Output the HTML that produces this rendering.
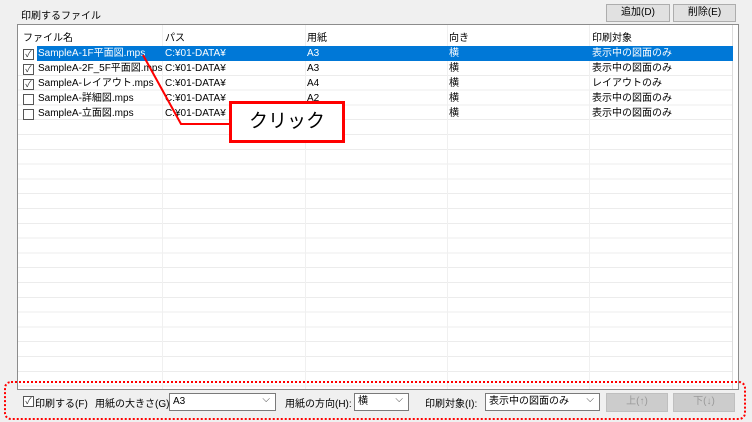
<html><head><style>
body{margin:0;width:752px;height:422px;background:#f0f0f0;font-family:"Liberation Sans","Noto Sans CJK JP",sans-serif;font-size:10px;color:#000;position:relative;overflow:hidden}
.a{position:absolute;white-space:nowrap}
.list{position:absolute;left:17px;top:24px;width:720px;height:364px;border:1px solid #8c8c8c;background:#fff;overflow:hidden}
.grid{position:absolute;left:0;top:36px;width:715px;height:330px;background:repeating-linear-gradient(to bottom,transparent 0,transparent 13.8px,#ececec 13.8px,#ececec 14.8px)}
.vl{position:absolute;top:0;width:1px;height:364px;background:#f0f0f0}
.btn{position:absolute;background:#e1e1e1;border:1px solid #adadad;text-align:center;font-size:10px;line-height:16px}
.cb{position:absolute;width:9px;height:9px;border:1px solid #555;background:#fff;font-size:9px;line-height:9px;text-align:center;color:#333}
.sel{position:absolute;border:1px solid #7a7a7a;background:#fff;height:16px;line-height:16px;padding-left:3px;font-size:10px}
.sel::after{content:"⌵";position:absolute;right:5px;top:-2px;color:#444}
</style></head><body>
<div class="a" style="left:21px;top:7px">印刷するファイル</div>
<div class="btn" style="left:606px;top:4px;width:62px">追加(D)</div>
<div class="btn" style="left:673px;top:4px;width:61px">削除(E)</div>
<div class="list">
<div class="grid"></div>
<div class="vl" style="left:144px"></div><div class="vl" style="left:287px"></div><div class="vl" style="left:429px"></div><div class="vl" style="left:571px"></div><div class="vl" style="left:714px;background:#ddd"></div>
<div class="a" style="left:5px;top:4px">ファイル名</div>
<div class="a" style="left:147px;top:4px">パス</div>
<div class="a" style="left:289px;top:4px">用紙</div>
<div class="a" style="left:431px;top:4px">向き</div>
<div class="a" style="left:574px;top:4px">印刷対象</div>
<div class="a" style="left:19px;top:21px;width:696px;height:15px;background:#0078d7"></div>
<div class="a" style="left:0;top:21px;line-height:15px;width:715px;height:75px">
<div class="a" style="left:20px;top:0;color:#fff">SampleA-1F平面図.mps</div><div class="a" style="left:147px;top:0;color:#fff">C:¥01-DATA¥</div><div class="a" style="left:289px;top:0;color:#fff">A3</div><div class="a" style="left:431px;top:0;color:#fff">横</div><div class="a" style="left:574px;top:0;color:#fff">表示中の図面のみ</div>
<div class="a" style="left:20px;top:15px">SampleA-2F_5F平面図.mps</div><div class="a" style="left:147px;top:15px">C:¥01-DATA¥</div><div class="a" style="left:289px;top:15px">A3</div><div class="a" style="left:431px;top:15px">横</div><div class="a" style="left:574px;top:15px">表示中の図面のみ</div>
<div class="a" style="left:20px;top:30px">SampleA-レイアウト.mps</div><div class="a" style="left:147px;top:30px">C:¥01-DATA¥</div><div class="a" style="left:289px;top:30px">A4</div><div class="a" style="left:431px;top:30px">横</div><div class="a" style="left:574px;top:30px">レイアウトのみ</div>
<div class="a" style="left:20px;top:45px">SampleA-詳細図.mps</div><div class="a" style="left:147px;top:45px">C:¥01-DATA¥</div><div class="a" style="left:289px;top:45px">A2</div><div class="a" style="left:431px;top:45px">横</div><div class="a" style="left:574px;top:45px">表示中の図面のみ</div>
<div class="a" style="left:20px;top:60px">SampleA-立面図.mps</div><div class="a" style="left:147px;top:60px">C:¥01-DATA¥</div><div class="a" style="left:289px;top:60px">A3</div><div class="a" style="left:431px;top:60px">横</div><div class="a" style="left:574px;top:60px">表示中の図面のみ</div>
</div>
<div class="cb" style="left:5px;top:24px">✓</div><div class="cb" style="left:5px;top:39px">✓</div><div class="cb" style="left:5px;top:54px">✓</div><div class="cb" style="left:5px;top:69px"></div><div class="cb" style="left:5px;top:84px"></div>
</div>
<svg class="a" style="left:0;top:0" width="752" height="422"><polyline points="143,55 181,124 229,124" fill="none" stroke="#f00" stroke-width="2"/>
<rect x="5" y="382" width="740" height="37" rx="6" fill="none" stroke="#f00" stroke-width="2" stroke-dasharray="2,2"/></svg>
<div class="a" style="left:229px;top:101px;width:110px;height:36px;border:3px solid #f00;background:#fff;font-size:19px;line-height:36px;text-align:center">クリック</div>
<div class="cb" style="left:23px;top:396px">✓</div>
<div class="a" style="left:35px;top:395px">印刷する(F)</div>
<div class="a" style="left:95px;top:395px">用紙の大きさ(G):</div>
<div class="sel" style="left:169px;top:393px;width:102px">A3</div>
<div class="a" style="left:285px;top:395px">用紙の方向(H):</div>
<div class="sel" style="left:354px;top:393px;width:50px">横</div>
<div class="a" style="left:425px;top:395px">印刷対象(I):</div>
<div class="sel" style="left:485px;top:393px;width:110px">表示中の図面のみ</div>
<div class="btn" style="left:606px;top:393px;width:60px;height:17px;color:#999;background:#ccc;border-color:#bfbfbf">上(↑)</div>
<div class="btn" style="left:673px;top:393px;width:60px;height:17px;color:#999;background:#ccc;border-color:#bfbfbf">下(↓)</div>
</body></html>
